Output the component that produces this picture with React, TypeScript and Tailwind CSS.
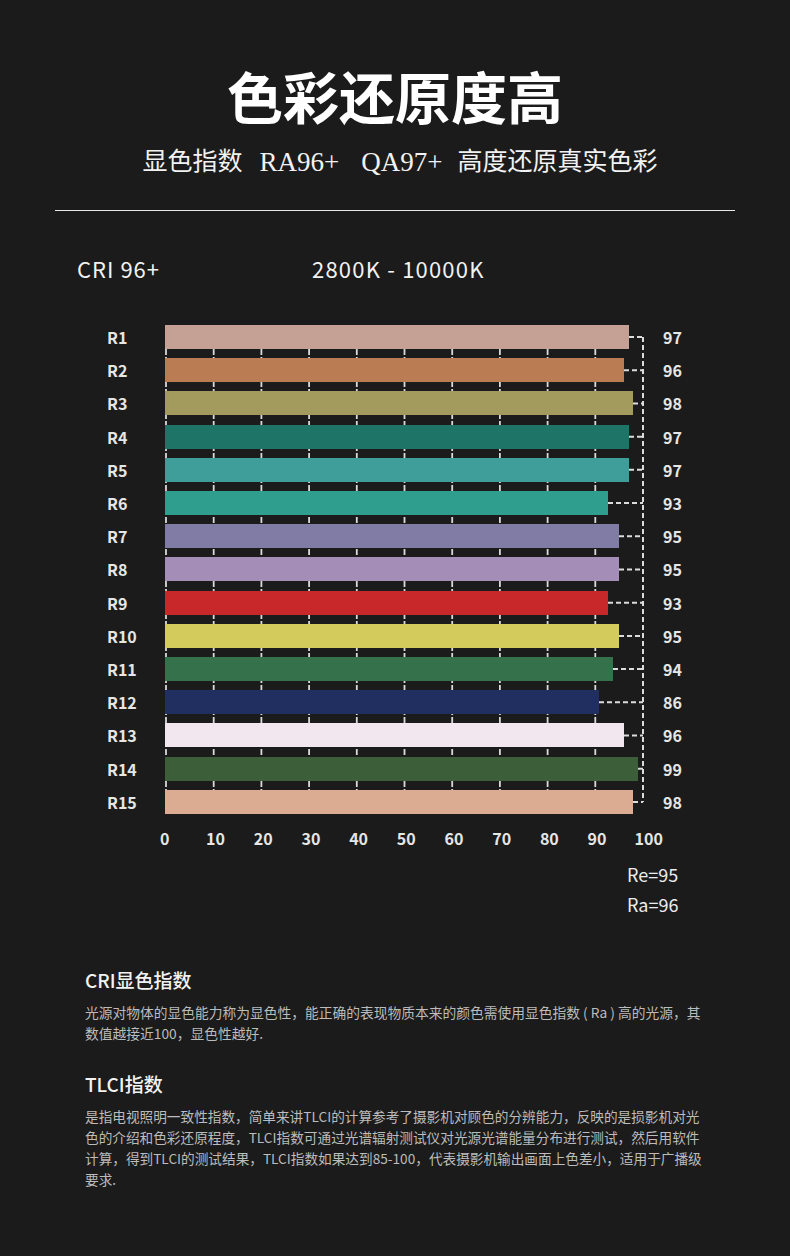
import React from "react";

const rows = [
  { l: "R1", v: 97, w: 464, c: "#c4a194" },
  { l: "R2", v: 96, w: 459, c: "#b97c53" },
  { l: "R3", v: 98, w: 468, c: "#a39a5d" },
  { l: "R4", v: 97, w: 464, c: "#1f7468" },
  { l: "R5", v: 97, w: 464, c: "#3f9d9a" },
  { l: "R6", v: 93, w: 443, c: "#2f9e8e" },
  { l: "R7", v: 95, w: 454, c: "#807ca6" },
  { l: "R8", v: 95, w: 454, c: "#a48db6" },
  { l: "R9", v: 93, w: 443, c: "#c8282a" },
  { l: "R10", v: 95, w: 454, c: "#d3cb5b" },
  { l: "R11", v: 94, w: 448, c: "#35714b" },
  { l: "R12", v: 86, w: 434, c: "#202e60" },
  { l: "R13", v: 96, w: 459, c: "#f3e7ef" },
  { l: "R14", v: 99, w: 473, c: "#3c5e39" },
  { l: "R15", v: 98, w: 468, c: "#dbac91" },
];

const PITCH = 33.21;
const BAR_H = 24;
const CHART_H = PITCH * 14 + BAR_H;
const STEP = 47.7;

const sans = { fontFamily: "'Noto Sans CJK SC', 'Noto Sans', sans-serif" };
const serif = { fontFamily: "'Liberation Serif', 'Noto Sans CJK SC', serif" };

export default function App() {
  return (
    <div className="w-[790px] min-h-[1256px] bg-[#1b1b1b] text-white pt-[63px] pb-[60px]" style={sans}>
      <h1 className="text-center text-[56px] leading-[64px] font-bold tracking-[0px]">色彩还原度高</h1>
      <div className="mt-[19px] pl-[10px] flex justify-center items-center text-[25px] leading-[32px] text-[#f2f2f2]" style={serif}>
        <span>显色指数</span>
        <span className="ml-[17px] text-[27px]">RA96+</span>
        <span className="ml-[22px] text-[27px]">QA97+</span>
        <span className="ml-[15px]">高度还原真实色彩</span>
      </div>
      <div className="mt-[32px] mx-[55px] h-px bg-[#e8e8e8]" />
      <div className="mt-[42px] flex items-center text-[22px] leading-[30px] text-[#f2f2f2]">
        <span className="ml-[77px] w-[235px] tracking-[1px]">CRI 96+</span>
        <span className="tracking-[1.2px]">2800K - 10000K</span>
      </div>

      <div className="mt-[42px] relative pl-[107px]">
        <svg
          className="absolute left-[165px] top-0 z-0"
          width={482}
          height={CHART_H}
          viewBox={`0 0 482 ${CHART_H}`}
        >
          {Array.from({ length: 10 }).map((_, k) => (
            <line
              key={k}
              x1={k * STEP + 1}
              x2={k * STEP + 1}
              y1={0}
              y2={CHART_H}
              stroke="#d9d9d9"
              strokeWidth={1.8}
              strokeDasharray="6 2"
            />
          ))}
          <line
            x1={478}
            x2={478}
            y1={BAR_H / 2}
            y2={BAR_H / 2 + PITCH * 14}
            stroke="#dcdcdc"
            strokeWidth={2}
            strokeDasharray="5 3"
          />
          {rows.map((r, i) => (
            <line
              key={r.l}
              x1={r.w}
              x2={478}
              y1={BAR_H / 2 + PITCH * i}
              y2={BAR_H / 2 + PITCH * i}
              stroke="#dcdcdc"
              strokeWidth={2}
              strokeDasharray="5 3"
            />
          ))}
        </svg>
        <div className="relative z-10 flex flex-col gap-[9.21px]">
          {rows.map((r) => (
            <div key={r.l} className="flex items-center h-[24px]">
              <span className="w-[58px] text-[16px] font-bold text-[#e6e6e6] leading-[24px]">{r.l}</span>
              <div className="w-[478px] h-full flex items-center">
                <div className="h-full" style={{ width: r.w, backgroundColor: r.c }} />
              </div>
              <span className="ml-[20px] text-[16px] font-bold text-[#e6e6e6] leading-[24px]">{r.v}</span>
            </div>
          ))}
        </div>
      </div>

      <div className="mt-[14px] flex pl-[144px] text-[16px] font-bold leading-[20px] text-[#e6e6e6]">
        <span className="w-[47.7px] flex justify-center -ml-[3px] mr-[3px]">0</span>
        {[10, 20, 30, 40, 50, 60, 70, 80, 90].map((n) => (
          <span key={n} className="w-[47.7px] flex justify-center">{n}</span>
        ))}
        <span className="w-[47.7px] flex justify-center ml-[4px]">100</span>
      </div>

      <div className="mt-[11px] pl-[627px] text-[18px] leading-[30px] text-[#ececec]">
        <div>Re=95</div>
        <div>Ra=96</div>
      </div>

      <div className="mt-[47px] pl-[85px] pr-[60px]">
        <h2 className="text-[19px] leading-[28px] font-medium text-[#f2f2f2]">CRI显色指数</h2>
        <p className="mt-[8px] text-[13.75px] leading-[21px] text-[#bcbcbc] whitespace-nowrap">
          光源对物体的显色能力称为显色性，能正确的表现物质本来的颜色需使用显色指数 ( Ra ) 高的光源，其
          <br />
          数值越接近100，显色性越好.
        </p>
        <h2 className="mt-[26px] text-[19px] leading-[28px] font-medium text-[#f2f2f2]">TLCI指数</h2>
        <p className="mt-[8px] text-[13.65px] leading-[21px] text-[#bcbcbc] whitespace-nowrap">
          是指电视照明一致性指数，简单来讲TLCI的计算参考了摄影机对顾色的分辨能力，反映的是损影机对光
          <br />
          色的介绍和色彩还原程度，TLCI指数可通过光谱辐射测试仪对光源光谱能量分布进行测试，然后用软件
          <br />
          计算，得到TLCI的测试结果，TLCI指数如果达到85-100，代表摄影机输出画面上色差小，适用于广播级
          <br />
          要求.
        </p>
      </div>
    </div>
  );
}
